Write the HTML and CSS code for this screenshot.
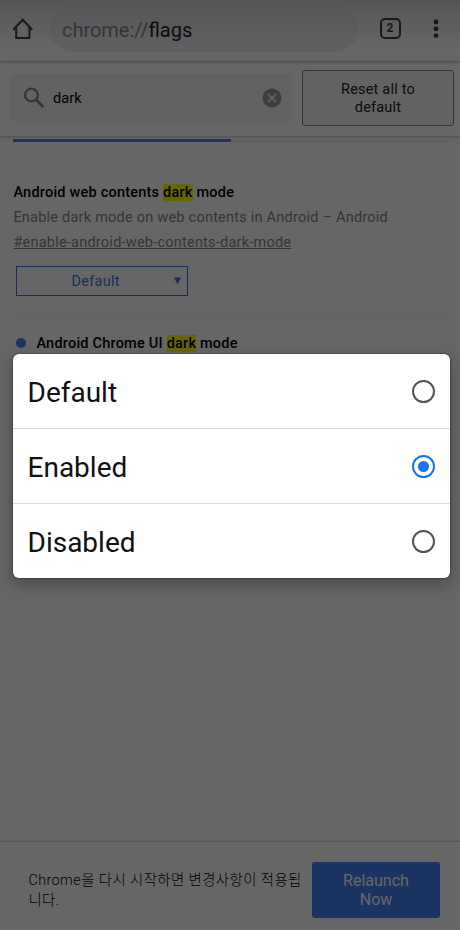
FILE: index.html
```html
<!DOCTYPE html>
<html lang="ko">
<head>
<meta charset="utf-8">
<title>chrome://flags</title>
<link rel="stylesheet" href="styles.css">
</head>
<body>
<div class="screen">
  <header class="toolbar">
    <svg class="home" width="24" height="24" viewBox="0 0 24 24"><path d="M2.2 12.7 11.7 2.7l9.5 10M5.2 10.2v10.9h13.2V10.2" fill="none" stroke="#3c4043" stroke-width="2"/></svg>
    <div class="address"><span class="scheme">chrome://</span><span class="host">flags</span></div>
    <div class="tabs">2</div>
    <svg class="menu" width="6" height="20" viewBox="0 0 6 20"><g fill="#3c4043"><circle cx="3" cy="3" r="2.4"/><circle cx="3" cy="9.8" r="2.4"/><circle cx="3" cy="16.6" r="2.4"/></g></svg>
  </header>
  <div class="searchbar">
    <div class="search">
      <svg width="22" height="22" viewBox="0 0 22 22"><g fill="none" stroke="#80868b" stroke-width="2.3"><circle cx="8.4" cy="8" r="6.4"/><path d="M13 12.6l7.3 7.3" stroke-width="2.8"/></g></svg>
      <span class="query">dark</span>
      <svg width="20" height="20" viewBox="0 0 20 20"><circle cx="10" cy="10" r="9.4" fill="#9a9c9f"/><path d="M6 6l8 8M14 6l-8 8" stroke="#f1f1f1" stroke-width="2"/></svg>
    </div>
    <button class="reset">Reset all to default</button>
  </div>
  <main class="content">
    <div class="tabline"><div class="active"></div></div>
    <section class="flag">
      <h2>Android web contents <mark>dark</mark> mode</h2>
      <p>Enable dark mode on web contents in Android – Android</p>
      <a class="link">#enable-android-web-contents-dark-mode</a>
      <div class="select"><span>Default</span><svg width="7" height="8" viewBox="0 0 7 8"><path d="M0 .5h7L3.5 7.5z" fill="#4272e0"/></svg></div>
    </section>
    <section class="flag second">
      <h2><i class="dot"></i>Android Chrome UI <mark>dark</mark> mode</h2>
    </section>
  </main>
  <footer class="relaunch">
    <p>Chrome을 다시 시작하면 변경사항이 적용됩니다.</p>
    <button>Relaunch<br>Now</button>
  </footer>
  <div class="scrim">
    <div class="dialog">
      <div class="option"><span>Default</span><i class="radio"></i></div>
      <div class="option"><span>Enabled</span><i class="radio checked"></i></div>
      <div class="option"><span>Disabled</span><i class="radio"></i></div>
    </div>
  </div>
</div>
</body>
</html>
```
FILE: styles.css
```css
* { box-sizing: border-box; }
body { margin: 0; font-family: Roboto, "Noto Sans CJK KR", sans-serif; }
h2, p { margin: 0; }
button { font-family: inherit; cursor: pointer; }

.screen {
  position: relative;
  display: flex;
  flex-direction: column;
  width: 460px;
  height: 930px;
  overflow: hidden;
  background: #fff;
}

.toolbar {
  display: flex;
  align-items: center;
  flex: none;
  height: 61px;
  padding: 0 21px 4px 11px;
  background: linear-gradient(#d4d4d4, #fff 48px);
  box-shadow: 0 1px 3px rgba(0, 0, 0, .3);
}
.address {
  width: 308px;
  height: 47px;
  margin-left: 15px;
  padding-left: 12px;
  border-radius: 24px;
  background: linear-gradient(#d5d7d9, #eceff2 42px);
  font-size: 20px;
  line-height: 50px;
}
.scheme { color: #80868b; letter-spacing: -.03px; }
.host { color: #202124; font-size: 20px; }
.tabs {
  width: 21px;
  height: 21px;
  margin: 0 0 0 21.5px;
  border: 2px solid #3c4043;
  border-radius: 5px;
  color: #3c4043;
  font-size: 12px;
  font-weight: 700;
  line-height: 17px;
  text-align: center;
}
.menu { margin-left: auto; }

.searchbar {
  display: flex;
  align-items: center;
  flex: none;
  height: 75px;
  padding: 0 6px 2px 10px;
  box-shadow: 0 1px 3px rgba(0, 0, 0, .25);
}
.search {
  display: flex;
  align-items: center;
  width: 282px;
  height: 47px;
  padding: 0 10px 0 13px;
  border-radius: 3px;
  background: #f4f4f4;
}
.query { flex: 1; margin-left: 8px; padding-top: 1px; font-size: 14.5px; letter-spacing: .1px; }
.reset {
  width: 152px;
  height: 56px;
  margin-left: 10px;
  padding: 2px 30px 0;
  border: 1px solid #80868b;
  border-radius: 3px;
  background: #f4f4f4;
  color: #202124;
  font-size: 14.5px;
  line-height: 17.5px;
  letter-spacing: .2px;
}

.content { flex: 1; padding: 3px 9px 0 13.4px; }
.tabline { height: 3px; background: linear-gradient(#fff 1px, #f1f1f1 1px); }
.active { width: 218px; height: 3px; background: #4285f4; }
.flag { height: 173px; padding-top: 39px; border-bottom: 1px solid #f1f1f1; }
.flag h2 { font-size: 14.5px; font-weight: 500; line-height: 23px; letter-spacing: .22px; }
mark { background: #ff0; color: inherit; }
.flag p, .link { color: #80868b; font-size: 14.5px; line-height: 25px; letter-spacing: .23px; }
.flag p { padding-top: 1px; }
.link { display: block; width: max-content; text-decoration: underline; }
.select {
  display: flex;
  align-items: center;
  width: 172px;
  height: 30px;
  margin: 11px 0 0 3px;
  padding: 0 6px 0 54px;
  border: 1px solid #4272e0;
  color: #4272e0;
  font-size: 14.5px;
  letter-spacing: .3px;
}
.select svg { margin-left: auto; }
.second { padding-top: 17px; border: 0; }
.dot {
  display: inline-block;
  width: 10px;
  height: 10px;
  margin: 0 10px 0 3px;
  border-radius: 50%;
  background: #4285f4;
}

.relaunch {
  display: flex;
  align-items: center;
  flex: none;
  height: 88px;
  padding: 8px 20px 0 28px;
  box-shadow: 0 -1px 2px rgba(0, 0, 0, .2);
}
.relaunch p {
  width: 284px;
  padding: 2px 8px 0 .4px;
  font-size: 14.4px;
  font-weight: 300;
  line-height: 20px;
  letter-spacing: .42px;
  word-break: break-all;
}
.relaunch button {
  flex: none;
  width: 128px;
  height: 56px;
  padding: 2px 0 0;
  border: 0;
  border-radius: 3px;
  background: #4285f4;
  color: #fff;
  font-size: 16px;
  line-height: 18.7px;
}

.scrim {
  position: absolute;
  inset: 0;
  display: flex;
  align-items: center;
  padding: 2px 10px 0 13px;
  background: rgba(0, 0, 0, .6);
}
.dialog {
  width: 437px;
  height: 224px;
  overflow: hidden;
  border-radius: 6px;
  background: #fff;
  box-shadow: 0 6px 16px rgba(0, 0, 0, .3), 0 0 2px rgba(0, 0, 0, .6);
}
.option {
  display: flex;
  align-items: center;
  justify-content: space-between;
  height: 75px;
  padding: 0 15px 0 14.5px;
  border-bottom: 1px solid #dadada;
  font-size: 28px;
  color: #111;
}
.option span { padding-top: 3px; }
.option:last-child { height: 74px; border: 0; }
.radio {
  display: grid;
  place-items: center;
  width: 23px;
  height: 23px;
  border: 2px solid #505357;
  border-radius: 50%;
}
.checked { border-color: #1a73e8; }
.checked::after {
  content: "";
  width: 11px;
  height: 11px;
  border-radius: 50%;
  background: #1a73e8;
}
```
